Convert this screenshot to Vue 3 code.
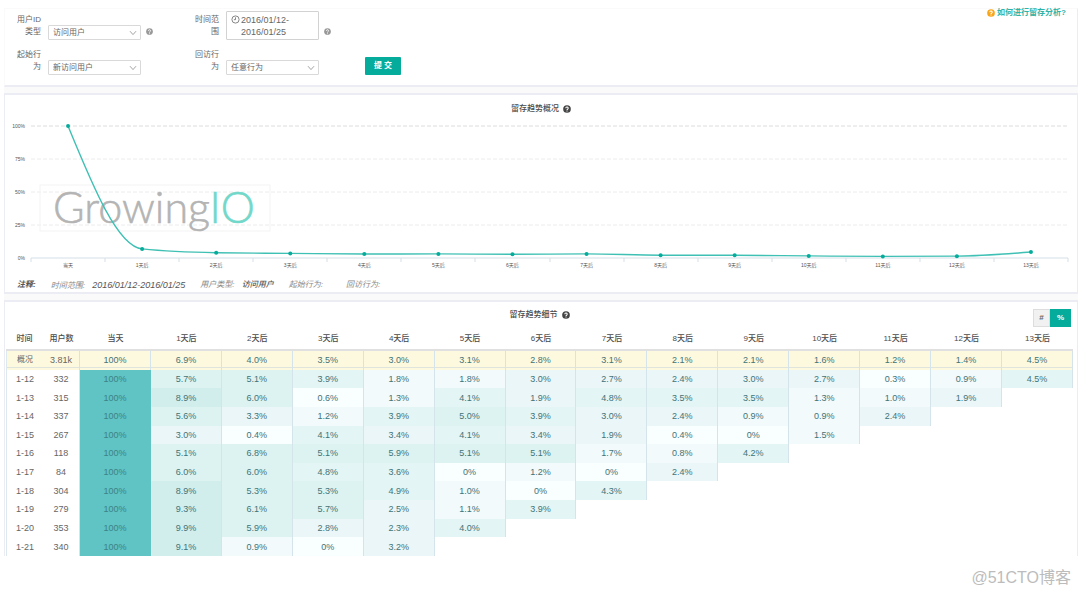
<script setup>
import { ref, computed } from 'vue'

const days = ['当天', ...Array.from({ length: 13 }, (_, i) => `${i + 1}天后`)]
const overview = [100, 6.9, 4.0, 3.5, 3.0, 3.1, 2.8, 3.1, 2.1, 2.1, 1.6, 1.2, 1.4, 4.5]
const rows = [
  { date: '1-12', users: 332, values: [100, 5.7, 5.1, 3.9, 1.8, 1.8, 3.0, 2.7, 2.4, 3.0, 2.7, 0.3, 0.9, 4.5] },
  { date: '1-13', users: 315, values: [100, 8.9, 6.0, 0.6, 1.3, 4.1, 1.9, 4.8, 3.5, 3.5, 1.3, 1.0, 1.9] },
  { date: '1-14', users: 337, values: [100, 5.6, 3.3, 1.2, 3.9, 5.0, 3.9, 3.0, 2.4, 0.9, 0.9, 2.4] },
  { date: '1-15', users: 267, values: [100, 3.0, 0.4, 4.1, 3.4, 4.1, 3.4, 1.9, 0.4, 0, 1.5] },
  { date: '1-16', users: 118, values: [100, 5.1, 6.8, 5.1, 5.9, 5.1, 5.1, 1.7, 0.8, 4.2] },
  { date: '1-17', users: 84, values: [100, 6.0, 6.0, 4.8, 3.6, 0, 1.2, 0, 2.4] },
  { date: '1-18', users: 304, values: [100, 8.9, 5.3, 5.3, 4.9, 1.0, 0, 4.3] },
  { date: '1-19', users: 279, values: [100, 9.3, 6.1, 5.7, 2.5, 1.1, 3.9] },
  { date: '1-20', users: 353, values: [100, 9.9, 5.9, 2.8, 2.3, 4.0] },
  { date: '1-21', users: 340, values: [100, 9.1, 0.9, 0, 3.2] },
]

const unit = ref('%')
const format = (v) => (v === 0 || v === 100 ? `${v}%` : `${v.toFixed(1)}%`)

function level(v) {
  if (v === undefined) return 'none'
  if (v >= 50) return 'full'
  if (v >= 8) return 'l6'
  if (v >= 5) return 'l5'
  if (v >= 3.5) return 'l4'
  if (v >= 1.9) return 'l3'
  if (v >= 0.7) return 'l2'
  return 'l1'
}

// chart geometry
const left = 26
const right = 1063
const top = 9
const bottom = 141
const step = (right - left) / 14
const grid = [100, 75, 50, 25, 0].map((v) => ({ v, y: Math.round(bottom - ((bottom - top) * v) / 100) }))
const ticks = Array.from({ length: 15 }, (_, i) => Math.round(left + step * i))
const points = overview.map((v, i) => ({
  x: left + step * (i + 0.5),
  y: bottom - ((bottom - top) * v) / 100,
}))

// monotone cubic interpolation through the points
const curve = computed(() => {
  const s = points.slice(1).map((p, i) => (p.y - points[i].y) / step)
  const m = points.map((_, i) => {
    if (i === 0 || i === points.length - 1) return 0
    const a = s[i - 1]
    const b = s[i]
    if (a * b <= 0) return 0
    return Math.sign(a) * Math.min(2 * Math.abs(a), 2 * Math.abs(b), Math.abs(a + b) / 2)
  })
  m[0] = (3 * s[0] - m[1]) / 2
  m[13] = (3 * s[12] - m[12]) / 2
  const h = step / 3
  return points.slice(1).reduce((d, p, i) => {
    const q = points[i]
    return `${d} C${q.x + h},${q.y + m[i] * h} ${p.x - h},${p.y - m[i + 1] * h} ${p.x},${p.y}`
  }, `M${points[0].x},${points[0].y}`)
})
</script>

<template>
  <div class="page">
    <main class="board">
      <form class="panel filters" @submit.prevent>
        <div class="field">
          <label for="user-type">用户ID<br />类型</label>
          <span class="select">
            <select id="user-type"><option>访问用户</option></select>
            <svg class="chevron" viewBox="0 0 8 6"><path d="M1 1.2 4 4.6 7 1.2" /></svg>
          </span>
          <svg class="help" viewBox="0 0 10 10"><circle cx="5" cy="5" r="4.8" /><path d="M3.5 4a1.5 1.5 0 1 1 2.2 1.3c-.5.3-.7.5-.7 1M5 7v1" /></svg>
        </div>
        <div class="field">
          <label for="range">时间范<br />围</label>
          <button id="range" type="button" class="range">
            <svg class="clock" viewBox="0 0 10 10"><circle cx="5" cy="5" r="4" /><path d="M5 2.6V5.2H3.2" /></svg>
            <span>2016/01/12-<br />2016/01/25</span>
          </button>
          <svg class="help" viewBox="0 0 10 10"><circle cx="5" cy="5" r="4.8" /><path d="M3.5 4a1.5 1.5 0 1 1 2.2 1.3c-.5.3-.7.5-.7 1M5 7v1" /></svg>
        </div>
        <a class="guide" href="#guide">
          <svg viewBox="0 0 10 10"><circle cx="5" cy="5" r="4.8" /><path d="M3.5 4a1.5 1.5 0 1 1 2.2 1.3c-.5.3-.7.5-.7 1M5 7v1" /></svg>
          如何进行留存分析?
        </a>
        <div class="field">
          <label for="start">起始行<br />为</label>
          <span class="select">
            <select id="start"><option>新访问用户</option></select>
            <svg class="chevron" viewBox="0 0 8 6"><path d="M1 1.2 4 4.6 7 1.2" /></svg>
          </span>
        </div>
        <div class="field">
          <label for="return">回访行<br />为</label>
          <span class="select">
            <select id="return"><option>任意行为</option></select>
            <svg class="chevron" viewBox="0 0 8 6"><path d="M1 1.2 4 4.6 7 1.2" /></svg>
          </span>
        </div>
        <button type="submit" class="submit">提 交</button>
      </form>

      <section class="panel trend">
        <h2>
          留存趋势概况
          <svg class="help dark" viewBox="0 0 10 10"><circle cx="5" cy="5" r="4.8" /><path d="M3.5 4a1.5 1.5 0 1 1 2.2 1.3c-.5.3-.7.5-.7 1M5 7v1" /></svg>
        </h2>
        <svg class="chart" viewBox="0 0 1072 154">
          <g v-for="g in grid" :key="g.v">
            <line v-if="g.v" :class="['gridline', { strong: g.v === 100 }]" :x1="left" :x2="right" :y1="g.y" :y2="g.y" />
            <text class="tick" :x="20" :y="g.y + 2" text-anchor="end">{{ g.v }}%</text>
          </g>
          <rect class="logo-box" x="35" y="68" width="230" height="46" />
          <text class="logo" x="48" y="106">Growing<tspan class="io">IO</tspan></text>
          <line class="axis" :x1="left" :x2="right" :y1="bottom" :y2="bottom" />
          <line v-for="t in ticks" :key="t" class="axis" :x1="t" :x2="t" :y1="bottom" :y2="bottom + 4" />
          <path class="curve" :d="curve" />
          <circle v-for="(p, i) in points" :key="i" class="dot" :cx="p.x" :cy="p.y" r="2" />
          <text v-for="(d, i) in days" :key="d" class="tick" :x="points[i].x" y="150" text-anchor="middle">{{ d }}</text>
        </svg>
        <p class="notes">
          <b class="lead">注释:</b>
          <span>时间范围: <b>2016/01/12-2016/01/25</b></span>
          <span>用户类型: <b>访问用户</b></span>
          <span class="wide">起始行为:</span>
          <span>回访行为:</span>
        </p>
      </section>

      <section class="panel detail">
        <header>
          <h2>
            留存趋势细节
            <svg class="help dark" viewBox="0 0 10 10"><circle cx="5" cy="5" r="4.8" /><path d="M3.5 4a1.5 1.5 0 1 1 2.2 1.3c-.5.3-.7.5-.7 1M5 7v1" /></svg>
          </h2>
          <div class="toggle">
            <button v-for="u in ['#', '%']" :key="u" type="button" :class="{ on: unit === u }" @click="unit = u">{{ u }}</button>
          </div>
        </header>
        <table>
          <colgroup>
            <col class="c-date" />
            <col class="c-users" />
            <col v-for="d in days" :key="d" />
          </colgroup>
          <thead>
            <tr>
              <th>时间</th>
              <th>用户数</th>
              <th v-for="d in days" :key="d">{{ d }}</th>
            </tr>
          </thead>
          <tbody>
            <tr class="overview">
              <td class="cjk">概况</td>
              <td class="users">3.81k</td>
              <td v-for="(v, i) in overview" :key="i" class="value">{{ format(v) }}</td>
            </tr>
            <tr v-for="r in rows" :key="r.date">
              <td>{{ r.date }}</td>
              <td class="users">{{ r.users }}</td>
              <td v-for="(d, i) in days" :key="d" :class="['value', level(r.values[i])]">
                {{ r.values[i] === undefined ? '' : format(r.values[i]) }}
              </td>
            </tr>
          </tbody>
        </table>
      </section>
    </main>
    <footer>@51CTO博客</footer>
  </div>
</template>

<style>
body {
  margin: 0;
  background: #fff;
}
</style>

<style scoped>
.page {
  padding: 8px 2px 0 4px;
  font-family: "Liberation Sans", "Noto Sans CJK SC", sans-serif;
  font-size: 8px;
  line-height: 12px;
  color: #666;
}
.page * {
  box-sizing: border-box;
}
button,
select {
  margin: 0;
  font: inherit;
  color: inherit;
}
svg {
  display: block;
}
.board {
  display: flex;
  flex-direction: column;
  gap: 6px;
  background: #fafafb;
}
.panel {
  background: #fff;
  border: 1px solid #ececf5;
  border-width: 2px 1px;
}
h2 {
  display: flex;
  align-items: center;
  justify-content: center;
  gap: 4px;
  margin: 0;
  font-size: 8px;
  line-height: 12px;
  font-weight: 500;
  color: #4a4a4a;
}

/* filters */
.filters {
  display: grid;
  grid-template-columns: 178px 172px 1fr;
  row-gap: 7px;
  padding: 3px 11px 10px 10px;
  border-top: 1px solid #fafafa;
  border-left-color: #fafafa;
}
.field {
  display: flex;
  align-items: flex-end;
  gap: 7px;
  height: 28px;
}
.field label {
  width: 26px;
  margin-bottom: 2px;
  text-align: right;
  white-space: nowrap;
}
.select {
  position: relative;
  width: 93px;
}
.select select {
  display: block;
  width: 100%;
  height: 15px;
  padding: 0 16px 0 4px;
  border: 1px solid #d9d9d9;
  border-radius: 1px;
  background: #fff;
  appearance: none;
  line-height: 13px;
}
.chevron {
  position: absolute;
  right: 4px;
  top: 5px;
  width: 8px;
  height: 6px;
  fill: none;
  stroke: #999;
  stroke-width: 0.9;
  pointer-events: none;
}
.range {
  display: flex;
  align-items: flex-start;
  gap: 1px;
  width: 93px;
  height: 29px;
  padding: 2px 4px;
  border: 1px solid #d2d2d2;
  border-radius: 1px;
  background: #fff;
  font-size: 9px;
  line-height: 12px;
  text-align: left;
}
.clock {
  flex: none;
  width: 9px;
  height: 9px;
  margin-top: 1px;
  fill: none;
  stroke: #777;
  stroke-width: 1;
}
.help {
  flex: none;
  width: 7px;
  height: 7px;
  fill: #999;
}
.field .help {
  margin-bottom: 5px;
  margin-left: -2px;
}
.help path,
.guide path {
  fill: none;
  stroke: #fff;
  stroke-width: 1.3;
}
.help.dark {
  width: 8px;
  height: 8px;
  fill: #444;
}
.guide {
  display: flex;
  align-items: center;
  gap: 2px;
  justify-self: end;
  height: 12px;
  margin-top: -5px;
  font-weight: 700;
  color: #2fb3a6;
  text-decoration: none;
  white-space: nowrap;
}
.guide svg {
  width: 8px;
  height: 8px;
  fill: #f9a51a;
}
.submit {
  align-self: end;
  justify-self: start;
  width: 36px;
  height: 18px;
  padding: 0;
  border: 0;
  border-radius: 1px;
  background: #05ab9b;
  color: #fff;
  font-weight: 700;
}

/* chart */
.trend {
  padding: 8px 0 0;
}
.chart {
  width: 100%;
  height: auto;
  margin-top: 2px;
}
.gridline {
  stroke: #ececec;
  stroke-width: 1;
  stroke-dasharray: 4 2;
}
.gridline.strong {
  stroke: #dcdcdc;
}
.axis {
  stroke: #d5dfe9;
  stroke-width: 1;
}
.tick {
  font-size: 5px;
  fill: #555;
}
.logo-box {
  fill: none;
  stroke: #f3f3f3;
}
.logo {
  font-family: Lato, sans-serif;
  font-size: 43px;
  font-weight: 300;
  fill: #b4b4b4;
  stroke: #b4b4b4;
  stroke-width: 0.6;
}
.io {
  fill: #72d8ca;
  stroke: #72d8ca;
}
.curve {
  fill: none;
  stroke: #3fc0b4;
  stroke-width: 1.4;
}
.dot {
  fill: #05ab9b;
}
.notes {
  display: flex;
  gap: 15px;
  margin: 0;
  padding: 8px 0 0 12px;
  font-style: italic;
  color: #888;
}
.notes b {
  margin-left: 5px;
  font-weight: 500;
  color: #555;
}
.notes span b {
  font-size: 9px;
}
.notes span + span b {
  font-size: 8px;
}
.notes .lead {
  margin-left: 0;
  font-weight: 700;
}
.notes .wide {
  margin-right: 8px;
}

/* table */
.detail {
  padding: 0 4px 0 1px;
  border-bottom: 0;
}
.detail header {
  display: grid;
  grid-template-columns: 1fr auto 1fr;
  align-items: center;
  height: 25px;
}
.detail h2 {
  grid-column: 2;
}
.toggle {
  display: flex;
  align-self: end;
  justify-self: end;
  margin-right: 2px;
}
.toggle button {
  width: 17px;
  height: 18px;
  padding: 0;
  border: 1px solid #ddd;
  background: #f1f1f1;
  font-weight: 700;
}
.toggle .on {
  width: 21px;
  border-color: #05ab9b;
  background: #05ab9b;
  color: #fff;
}
table {
  width: 100%;
  height: 229px;
  table-layout: fixed;
  border-collapse: separate;
  border-spacing: 0;
  text-align: center;
}
.c-date {
  width: 37px;
}
.c-users {
  width: 37px;
}
th {
  height: 24px;
  padding: 1px 0 0;
  border-bottom: 2px solid #e0e0e0;
  font-weight: 500;
  color: #4a4a4a;
}
td {
  padding: 0;
  font-size: 9px;
  line-height: 12px;
}
td.cjk {
  font-size: 8px;
}
td:first-child {
  border-left: 1px solid #dde9ee;
}
.users,
.value {
  border-right: 1px solid #d5e4ea;
}
.value {
  color: #3f7378;
}
.overview td {
  background: linear-gradient(#fdf9de 0 16px, #dfe4dc 16px 17px, #fdf9de 17px);
}
.full {
  background: #60c4c4;
  border-color: #60c4c4;
  color: #3c8386;
}
.l6 { background: #d1eeec; }
.l5 { background: #dcf3f1; }
.l4 { background: #e3f5f4; }
.l3 { background: #eaf6f8; }
.l2 { background: #f2fafb; }
.l1 { background: #f9fefe; }
.none { border-color: transparent; }
footer {
  padding: 10px 7px 0 0;
  font-size: 16px;
  line-height: 24px;
  text-align: right;
  color: #bcbcbc;
}
</style>
